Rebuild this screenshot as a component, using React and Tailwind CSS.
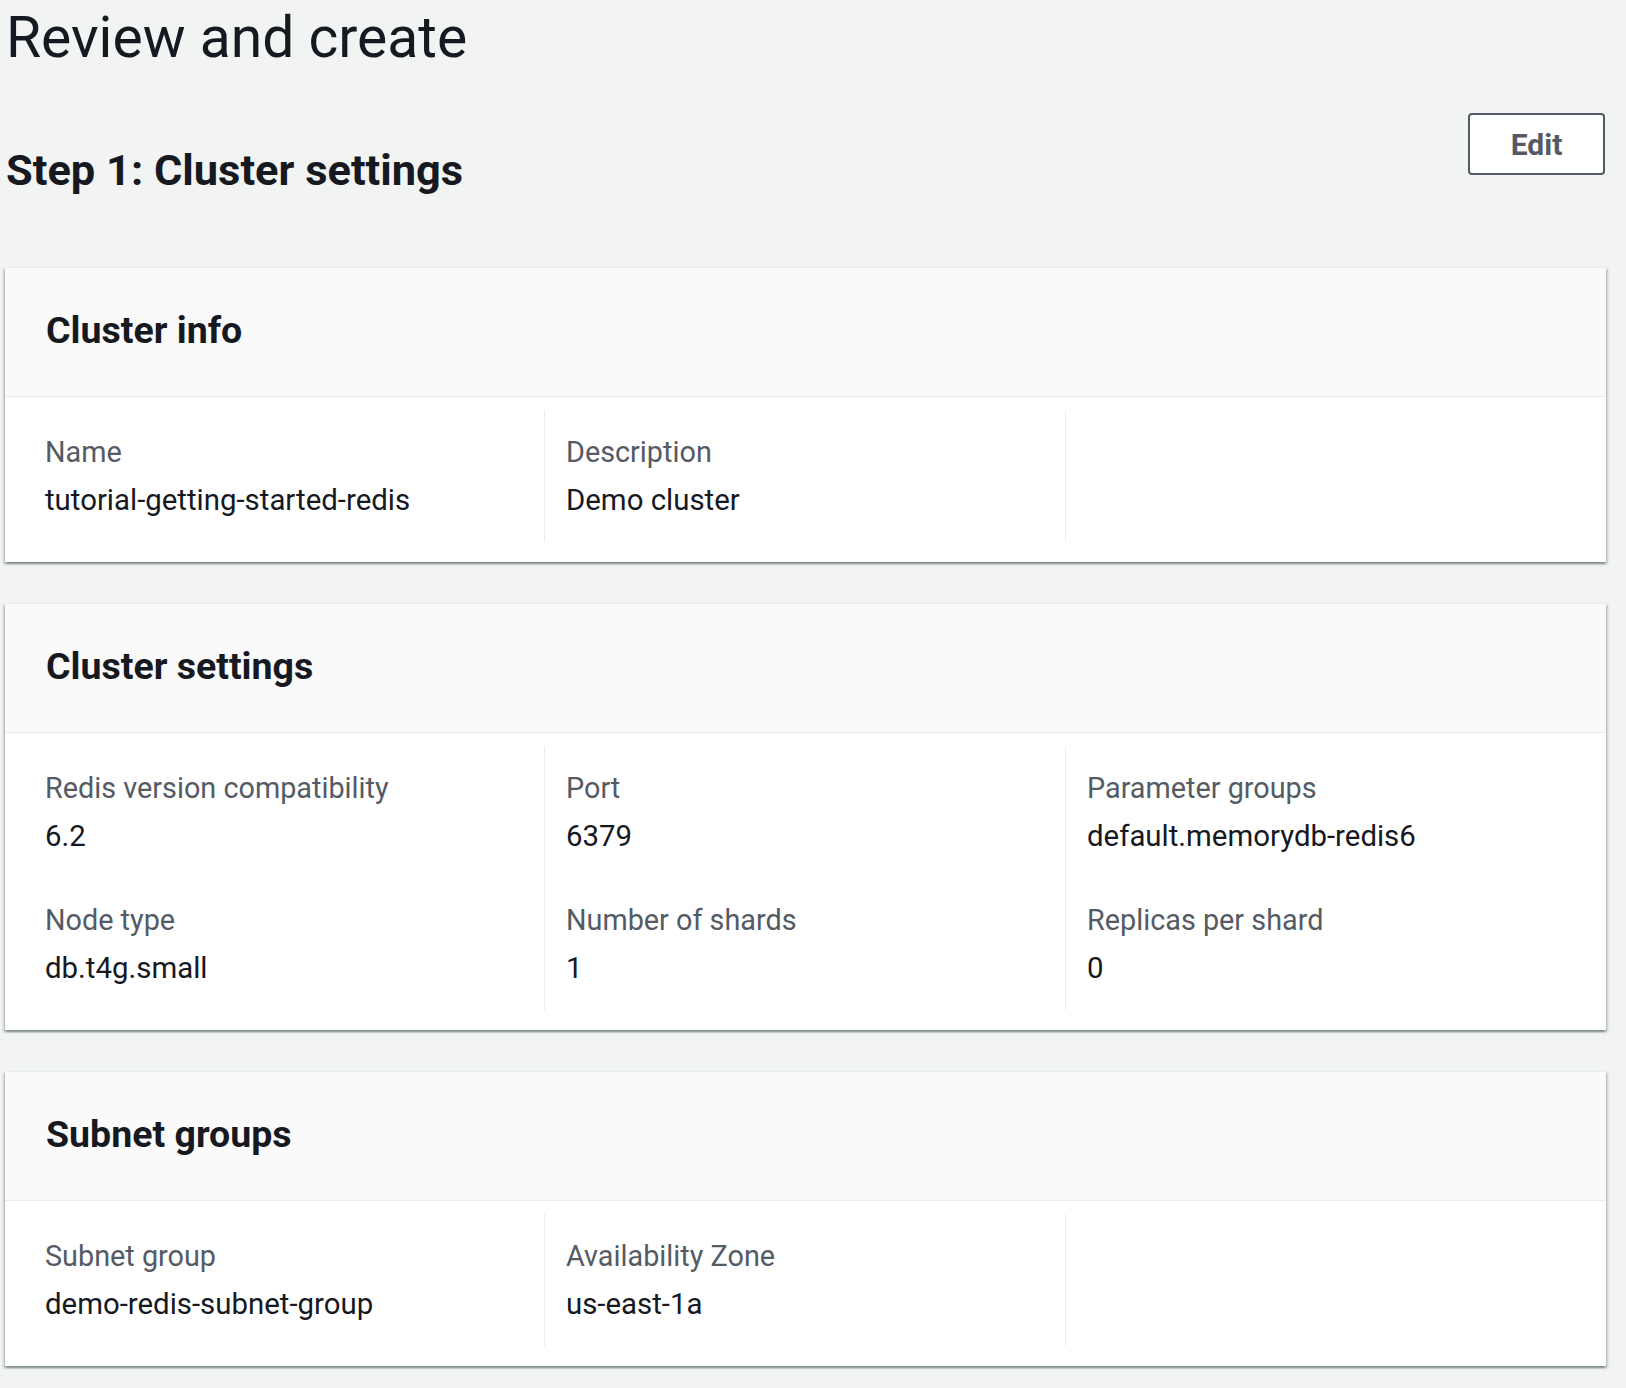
import React from 'react'

// ── Review data ───────────────────────────────────────────────────────────────
const sections = [
  {
    title: 'Cluster info',
    columns: [
      [{ label: 'Name', value: 'tutorial-getting-started-redis' }],
      [{ label: 'Description', value: 'Demo cluster' }],
      [],
    ],
  },
  {
    title: 'Cluster settings',
    columns: [
      [
        { label: 'Redis version compatibility', value: '6.2' },
        { label: 'Node type', value: 'db.t4g.small' },
      ],
      [
        { label: 'Port', value: '6379' },
        { label: 'Number of shards', value: '1' },
      ],
      [
        { label: 'Parameter groups', value: 'default.memorydb-redis6' },
        { label: 'Replicas per shard', value: '0' },
      ],
    ],
  },
  {
    title: 'Subnet groups',
    columns: [
      [{ label: 'Subnet group', value: 'demo-redis-subnet-group' }],
      [{ label: 'Availability Zone', value: 'us-east-1a' }],
      [],
    ],
  },
]

function KeyValue({ label, value }) {
  return (
    <div>
      <div className="text-[28.8px] leading-[43px] text-[#545b64] mb-[5px]">{label}</div>
      <div className="text-[29.4px] leading-[43px] text-[#16191f]">{value}</div>
    </div>
  )
}

function Container({ title, columns }) {
  return (
    <section className="bg-white border-t border-[#eaeded] shadow-[0_2px_2px_0_rgba(0,28,36,0.3),2px_2px_2px_0_rgba(0,28,36,0.15),-2px_2px_2px_0_rgba(0,28,36,0.15)]">
      <div className="bg-[#fafafa] border-b border-[#eaeded] pl-[41px] pr-[40px] pt-[38px] pb-[42px]">
        <h3 className="text-[37.5px] leading-[48px] font-bold text-[#16191f]">{title}</h3>
      </div>
      <div className="grid grid-cols-3 pl-[18px] pr-[20px] pt-[13px] pb-[20px]">
        {columns.map((items, i) => (
          <div
            key={i}
            className={
              'flex flex-col gap-[41px] pl-[21px] pr-[20px] pt-[21px] pb-[20px] border-l ' +
              (i === 0 ? 'border-transparent' : 'border-[#eaeded]')
            }
          >
            {items.map((kv) => (
              <KeyValue key={kv.label} label={kv.label} value={kv.value} />
            ))}
          </div>
        ))}
      </div>
    </section>
  )
}

export default function App() {
  return (
    <div className="min-h-screen bg-[#f2f3f3] pl-[5px] pr-[20px] pb-[22px] font-[Roboto,'Liberation_Sans',sans-serif] text-[#16191f]">
      {/* ── Page title ─────────────────────────────────────────────────────── */}
      <h1 className="text-[57px] leading-[66px] font-normal pt-[5px] ml-[1px]">Review and create</h1>

      {/* ── Step header ────────────────────────────────────────────────────── */}
      <div className="flex items-start justify-between mt-[42px]">
        <h2 className="text-[43.4px] leading-[52px] font-bold mt-[32px] ml-[1px]">Step 1: Cluster settings</h2>
        <button
          type="button"
          className="h-[62px] w-[137px] mr-[1px] rounded-[4px] border-2 border-[#545b64] bg-white text-[30px] font-bold text-[#545b64] flex items-center justify-center"
        >
          Edit
        </button>
      </div>

      {/* ── Sections ───────────────────────────────────────────────────────── */}
      <div className="flex flex-col gap-[41px] mt-[70px]">
        {sections.map((s) => (
          <Container key={s.title} title={s.title} columns={s.columns} />
        ))}
      </div>
    </div>
  )
}
